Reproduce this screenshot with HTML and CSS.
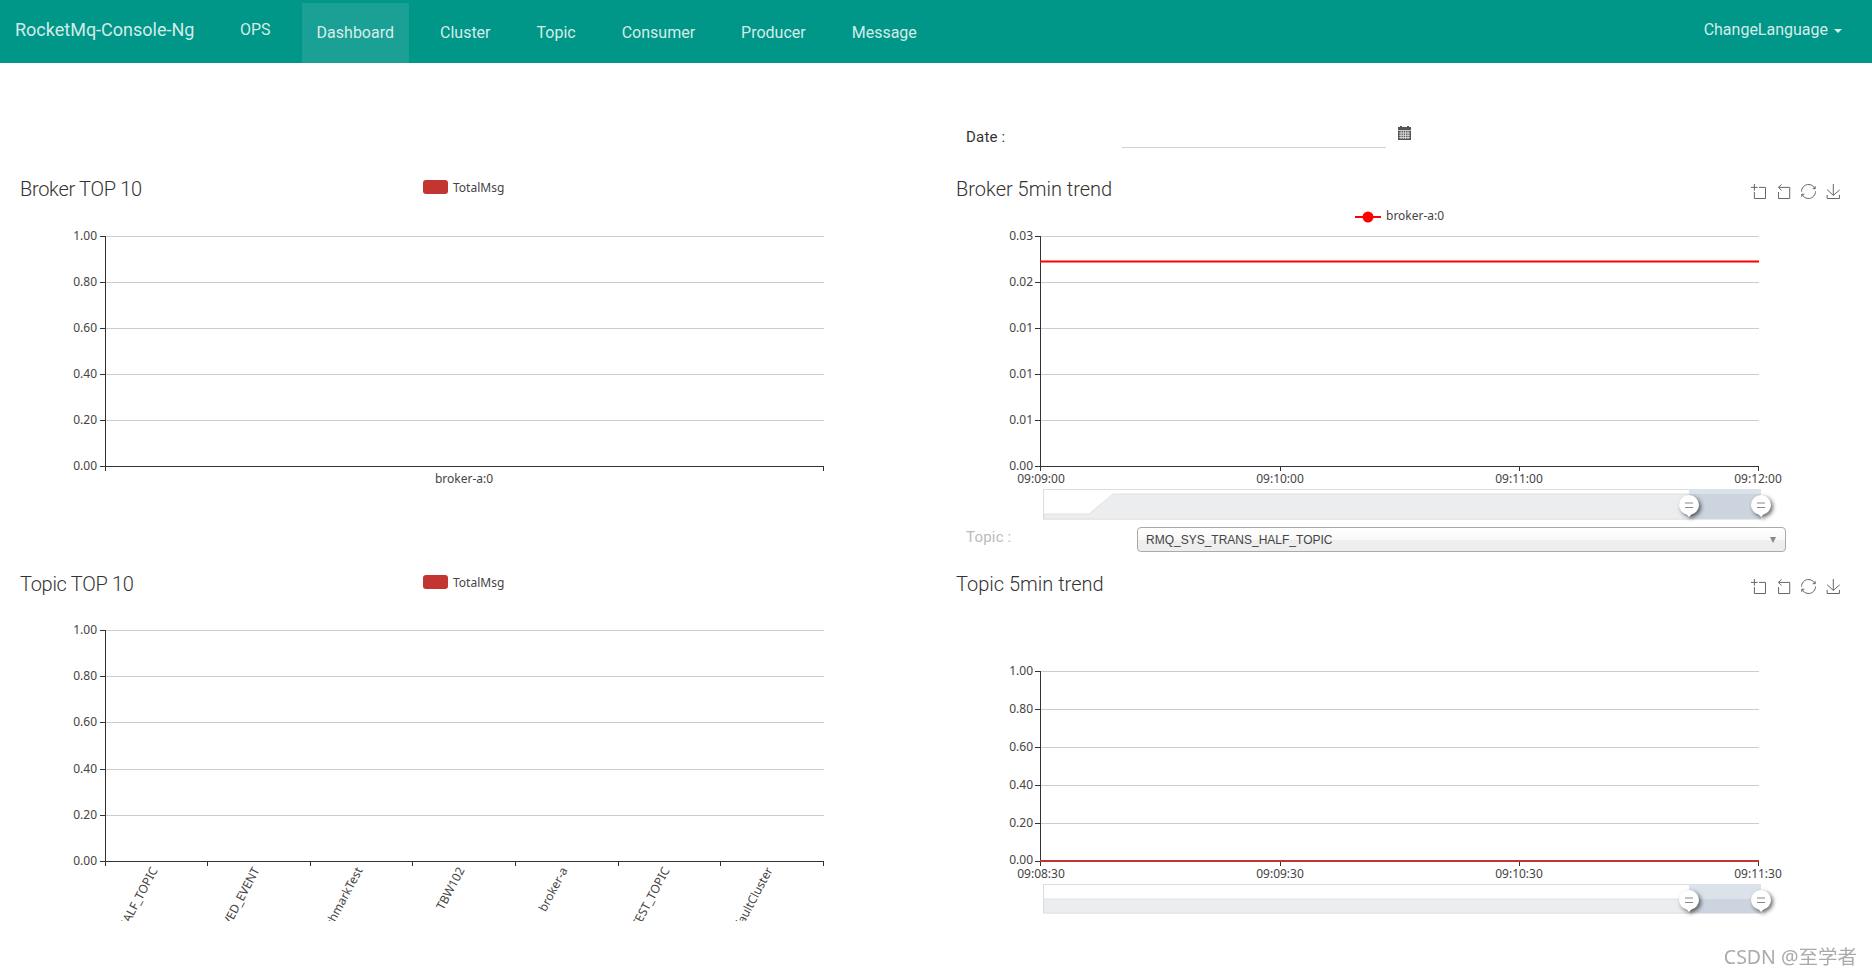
FILE: index.html
```html
<!DOCTYPE html>
<html lang="en">
<head>
<meta charset="utf-8">
<title>RocketMq-Console-Ng</title>
<link rel="stylesheet" href="styles.css">
</head>
<body>
<nav class="navbar">
  <a class="brand">RocketMq-Console-Ng</a>
  <a class="nav-item nav-ops">OPS</a>
  <a class="nav-item active">Dashboard</a>
  <a class="nav-item">Cluster</a>
  <a class="nav-item">Topic</a>
  <a class="nav-item">Consumer</a>
  <a class="nav-item">Producer</a>
  <a class="nav-item">Message</a>
  <a class="lang">ChangeLanguage<span class="caret"></span></a>
</nav>

<main class="dash">
  <div class="date-row">
    <label class="date-label">Date :</label>
    <div class="date-input"></div>
    <svg class="calendar" viewBox="0 0 13 14" width="13" height="14">
      <path class="cal-body" d="M2 0h2v1h5V0h2v1h2v13H0V1h2z"/>
      <path class="cal-grid" d="M0 4.5h13M1 7h11M1 9.3h11M1 11.6h11M3 5v8M5.3 5v8M7.6 5v8M10 5v8"/>
    </svg>
  </div>

  <section class="panel panel-first panel-left">
    <header class="panel-head">
      <h2 class="panel-title">Broker TOP 10</h2>
      <div class="legend"><span class="legend-swatch"></span>TotalMsg</div>
    </header>
    <svg class="chart chart-top" viewBox="0 205 936 320">
      <g class="grid-lines">
        <path d="M105 236.5H824M105 282.5H824M105 328.5H824M105 374.5H824M105 420.5H824"/>
      </g>
      <path class="axis" d="M105.5 236V471M100 236.5H105M100 282.5H105M100 328.5H105M100 374.5H105M100 420.5H105M100 466.5H824M823.5 466V471"/>
      <g class="labels labels-y">
        <text x="97" y="240">1.00</text><text x="97" y="286">0.80</text><text x="97" y="332">0.60</text>
        <text x="97" y="378">0.40</text><text x="97" y="424">0.20</text><text x="97" y="470">0.00</text>
      </g>
      <text class="labels labels-x" x="464" y="483">broker-a:0</text>
    </svg>
  </section>

  <section class="panel panel-first">
    <header class="panel-head">
      <h2 class="panel-title">Broker 5min trend</h2>
      <div class="toolbox">
        <svg viewBox="0 0 60 60" width="15" height="15"><path d="M0,13.5h26.9 M13.5,26.9V0 M32.1,13.5H58V58H13.5 V32.1"/></svg>
        <svg viewBox="0 0 60 60" width="15" height="15"><path d="M22,1.4L9.9,13.5l12.3,12.3 M10.3,13.5H54.9v44.6 H10.3v-26"/></svg>
        <svg viewBox="0 0 60 60" width="15" height="15"><path d="M47,18.9h9.8V8.7 M56.3,20.1 C52.1,9,40.5,0.6,26.8,2.1C12.6,3.7,1.6,16.2,2.1,30.6 M13,41.1H3.1v10.2 M3.7,39.9c4.2,11.1,15.8,19.5,29.5,18 c14.2-1.6,25.2-14.1,24.7-28.5"/></svg>
        <svg viewBox="0 0 60 60" width="15" height="15"><path d="M4.7,22.9L29.3,45.5L54.7,23.4M4.6,43.6L4.6,58L53.8,58L53.8,43.6M29.2,45.1L29.2,0"/></svg>
      </div>
    </header>
    <svg class="chart chart-top" viewBox="0 205 936 320">
      <path class="legend-line" d="M419 217H445"/>
      <circle class="legend-dot" cx="432" cy="217" r="5.5"/>
      <text class="labels" x="450" y="220">broker-a:0</text>
      <g class="grid-lines">
        <path d="M104 236.5H823M104 282.5H823M104 328.5H823M104 374.5H823M104 420.5H823"/>
      </g>
      <path class="axis" d="M104.5 236V471M99 236.5H104M99 282.5H104M99 328.5H104M99 374.5H104M99 420.5H104M99 466.5H823M822.5 466V471M344.5 466V471M583.5 466V471"/>
      <path class="series-red" d="M104 261.5H823"/>
      <g class="labels labels-y">
        <text x="97" y="240">0.03</text><text x="97" y="286">0.02</text><text x="97" y="332">0.01</text>
        <text x="97" y="378">0.01</text><text x="97" y="424">0.01</text><text x="97" y="470">0.00</text>
      </g>
      <g class="labels labels-x">
        <text x="105" y="483">09:09:00</text><text x="344" y="483">09:10:00</text>
        <text x="583" y="483">09:11:00</text><text x="822" y="483">09:12:00</text>
      </g>
      <rect class="slider-bg" x="107.5" y="489.5" width="717" height="29.5"/>
      <path class="slider-shadow" d="M108 514H153L177 494H824V519H108z"/>
      <rect class="slider-sel-top" x="753" y="489" width="72" height="30"/>
      <rect class="slider-sel" x="753" y="494" width="72" height="25"/>
      <g class="handle" transform="translate(753 505)"><path class="handle-pin" d="M-10 0A10 10 0 0 1 10 0A10 10 0 0 1 2 9.8L0 12L-2 9.8A10 10 0 0 1-10 0z"/><path class="handle-bars" d="M-4 -2H4M-4 2.5H4"/></g>
      <g class="handle" transform="translate(825 505)"><path class="handle-pin" d="M-10 0A10 10 0 0 1 10 0A10 10 0 0 1 2 9.8L0 12L-2 9.8A10 10 0 0 1-10 0z"/><path class="handle-bars" d="M-4 -2H4M-4 2.5H4"/></g>
    </svg>
    <div class="topic-row">
      <label class="topic-label">Topic :</label>
      <div class="select">RMQ_SYS_TRANS_HALF_TOPIC<span class="select-arrow"></span></div>
    </div>
  </section>

  <section class="panel panel-left">
    <header class="panel-head">
      <h2 class="panel-title">Topic TOP 10</h2>
      <div class="legend"><span class="legend-swatch"></span>TotalMsg</div>
    </header>
    <svg class="chart chart-bottom" viewBox="0 600 936 330">
      <defs><clipPath id="rot-clip"><rect x="100" y="866" width="740" height="55"/></clipPath></defs>
      <g class="grid-lines">
        <path d="M105 630.5H824M105 676.5H824M105 722.5H824M105 769.5H824M105 815.5H824"/>
      </g>
      <path class="axis" d="M105.5 630V866M100 630.5H105M100 676.5H105M100 722.5H105M100 769.5H105M100 815.5H105M100 861.5H824M207.5 861V866M310.5 861V866M412.5 861V866M515.5 861V866M618.5 861V866M720.5 861V866M823.5 861V866"/>
      <g class="labels labels-y">
        <text x="97" y="634">1.00</text><text x="97" y="680">0.80</text><text x="97" y="726">0.60</text>
        <text x="97" y="773">0.40</text><text x="97" y="819">0.20</text><text x="97" y="865">0.00</text>
      </g>
      <g class="labels labels-rot" clip-path="url(#rot-clip)">
        <text transform="translate(158 870) rotate(-62)">RMQ_SYS_TRANS_HALF_TOPIC</text>
        <text transform="translate(260 870) rotate(-62)">OFFSET_MOVED_EVENT</text>
        <text transform="translate(363 870) rotate(-62)">BenchmarkTest</text>
        <text transform="translate(465 870) rotate(-62)">TBW102</text>
        <text transform="translate(568 870) rotate(-62)">broker-a</text>
        <text transform="translate(670 870) rotate(-62)">SELF_TEST_TOPIC</text>
        <text transform="translate(773 870) rotate(-62)">DefaultCluster</text>
      </g>
    </svg>
  </section>

  <section class="panel">
    <header class="panel-head">
      <h2 class="panel-title">Topic 5min trend</h2>
      <div class="toolbox">
        <svg viewBox="0 0 60 60" width="15" height="15"><path d="M0,13.5h26.9 M13.5,26.9V0 M32.1,13.5H58V58H13.5 V32.1"/></svg>
        <svg viewBox="0 0 60 60" width="15" height="15"><path d="M22,1.4L9.9,13.5l12.3,12.3 M10.3,13.5H54.9v44.6 H10.3v-26"/></svg>
        <svg viewBox="0 0 60 60" width="15" height="15"><path d="M47,18.9h9.8V8.7 M56.3,20.1 C52.1,9,40.5,0.6,26.8,2.1C12.6,3.7,1.6,16.2,2.1,30.6 M13,41.1H3.1v10.2 M3.7,39.9c4.2,11.1,15.8,19.5,29.5,18 c14.2-1.6,25.2-14.1,24.7-28.5"/></svg>
        <svg viewBox="0 0 60 60" width="15" height="15"><path d="M4.7,22.9L29.3,45.5L54.7,23.4M4.6,43.6L4.6,58L53.8,58L53.8,43.6M29.2,45.1L29.2,0"/></svg>
      </div>
    </header>
    <svg class="chart chart-bottom" viewBox="0 600 936 330">
      <g class="grid-lines">
        <path d="M104 671.5H823M104 709.5H823M104 747.5H823M104 785.5H823M104 823.5H823"/>
      </g>
      <path class="axis" d="M104.5 671V866M99 671.5H104M99 709.5H104M99 747.5H104M99 785.5H104M99 823.5H104M99 861.5H823M344.5 861V866M583.5 861V866M822.5 861V866"/>
      <path class="series-dark" d="M104 861H823"/>
      <g class="labels labels-y">
        <text x="97" y="675">1.00</text><text x="97" y="713">0.80</text><text x="97" y="751">0.60</text>
        <text x="97" y="789">0.40</text><text x="97" y="827">0.20</text><text x="97" y="864">0.00</text>
      </g>
      <g class="labels labels-x">
        <text x="105" y="878">09:08:30</text><text x="344" y="878">09:09:30</text>
        <text x="583" y="878">09:10:30</text><text x="822" y="878">09:11:30</text>
      </g>
      <rect class="slider-bg" x="107.5" y="884.5" width="717" height="28.5"/>
      <path class="slider-shadow" d="M108 899H824V913H108z"/>
      <rect class="slider-sel-top" x="753" y="884" width="72" height="29"/>
      <rect class="slider-sel" x="753" y="899" width="72" height="14"/>
      <g class="handle" transform="translate(753 900)"><path class="handle-pin" d="M-10 0A10 10 0 0 1 10 0A10 10 0 0 1 2 9.8L0 12L-2 9.8A10 10 0 0 1-10 0z"/><path class="handle-bars" d="M-4 -2H4M-4 2.5H4"/></g>
      <g class="handle" transform="translate(825 900)"><path class="handle-pin" d="M-10 0A10 10 0 0 1 10 0A10 10 0 0 1 2 9.8L0 12L-2 9.8A10 10 0 0 1-10 0z"/><path class="handle-bars" d="M-4 -2H4M-4 2.5H4"/></g>
    </svg>
  </section>
</main>

<div class="watermark">CSDN @至学者</div>
</body>
</html>
```

FILE: styles.css
```css
* { box-sizing: border-box; }
html, body { margin: 0; height: 100%; }
body {
  background: #fff;
  font-family: Roboto, "Noto Sans", sans-serif;
  color: #333;
  overflow: hidden;
}

/* navbar */
.navbar {
  display: flex;
  align-items: stretch;
  height: 63px;
  background: #009688;
  color: rgba(255, 255, 255, .84);
  font-size: 16px;
  gap: 16px;
}
.brand {
  font-size: 18px;
  line-height: 60px;
  padding: 0 0 0 15px;
  width: 209px;
}
.nav-item {
  padding: 0 15px;
  margin-top: 3px;
  line-height: 60px;
}
.nav-ops { margin-top: 0; line-height: 60px; height: 60px; }
.nav-item.active { background: rgba(255, 255, 255, .1); }
.lang {
  margin-left: auto;
  padding-right: 30px;
  line-height: 60px;
}
.caret {
  display: inline-block;
  margin-left: 6px;
  vertical-align: middle;
  border-top: 4px solid;
  border-left: 4px solid transparent;
  border-right: 4px solid transparent;
}

/* layout */
.dash {
  display: grid;
  grid-template-columns: 936px 936px;
  grid-template-rows: 107px 395px auto;
}
.date-row {
  grid-column: 2;
  display: flex;
  align-items: flex-start;
  padding: 50px 0 0 30px;
}
.date-label {
  width: 156px;
  margin-top: 14px;
  font-size: 15px;
  letter-spacing: .2px;
  line-height: 20px;
}
.date-input {
  width: 264px;
  height: 35px;
  border-bottom: 1px solid #d2d2d2;
}
.calendar { margin: 13px 0 0 12px; }
.cal-body { fill: #555; }
.cal-grid { stroke: #fff; stroke-width: .7; fill: none; }

.panel { min-width: 0; }
.panel-head {
  display: flex;
  align-items: flex-start;
  height: 35px;
  padding: 0 31px 0 20px;
}
.panel-title {
  margin: 0;
  font-size: 20px;
  font-weight: 300;
  line-height: 38px;
  width: 403px;
  white-space: nowrap;
}
.panel-left .panel-title { letter-spacing: -.3px; }
.legend {
  display: flex;
  align-items: center;
  height: 14px;
  margin-top: 10px;
  font: 12px "Noto Sans", sans-serif;
  color: #444;
}
.legend-swatch {
  width: 25px;
  height: 14px;
  margin-right: 5px;
  background: #c23531;
  border-radius: 3px;
}
.toolbox {
  display: flex;
  margin-left: auto;
  gap: 10px;
  margin-top: 14px;
}
.toolbox svg { display: block; }
.toolbox path {
  fill: none;
  stroke: #666;
  stroke-width: 1px;
  vector-effect: non-scaling-stroke;
}

/* charts */
.chart { display: block; width: 936px; }
.chart-top { height: 320px; }
.chart-bottom { height: 330px; }
.grid-lines path { stroke: #ccc; stroke-width: 1; fill: none; }
.axis { stroke: #333; stroke-width: 1; fill: none; }
.labels, .labels text { font: 12px "Noto Sans", sans-serif; fill: #444; }
.labels-y text { text-anchor: end; }
.labels-x, .labels-x text { text-anchor: middle; }
.labels-rot text { text-anchor: end; }
.legend-line { stroke: #f00; stroke-width: 2; fill: none; }
.legend-dot { fill: #f00; }
.series-red { stroke: #f00; stroke-width: 2; fill: none; }
.series-dark { stroke: #c23531; stroke-width: 2; fill: none; }

/* slider */
.slider-bg { fill: #fff; stroke: #ddd; stroke-width: 1; }
.slider-shadow { fill: #ecedef; stroke: #e0e1e3; stroke-width: 1; }
.slider-sel-top { fill: #dbe2ea; }
.slider-sel { fill: #ccd4df; }
.handle-pin {
  fill: #fff;
  filter: drop-shadow(2px 2px 2px rgba(0, 0, 0, .6));
}
.handle-bars { stroke: #888; stroke-width: 1; fill: none; }

/* topic select */
.topic-row {
  display: flex;
  align-items: flex-start;
  padding: 2px 0 0 30px;
}
.topic-label {
  width: 171px;
  font-size: 15px;
  letter-spacing: .2px;
  line-height: 20px;
  color: #bbb;
}
.select {
  position: relative;
  width: 649px;
  height: 25px;
  padding-left: 8px;
  border: 1px solid #aaa;
  border-radius: 4px;
  background: linear-gradient(#fff 0, #f8f8f8 50%, #eee 52%, #eee 100%);
  font: 12px/24px "Liberation Sans", sans-serif;
  color: #444;
}
.select-arrow {
  position: absolute;
  top: 9px;
  right: 9px;
  border-top: 6px solid #888;
  border-left: 3px solid transparent;
  border-right: 3px solid transparent;
}

.watermark {
  position: fixed;
  right: 15px;
  bottom: 5px;
  font: 19.5px "Noto Sans", "Noto Sans CJK SC", sans-serif;
  color: #aaa;
}
```
